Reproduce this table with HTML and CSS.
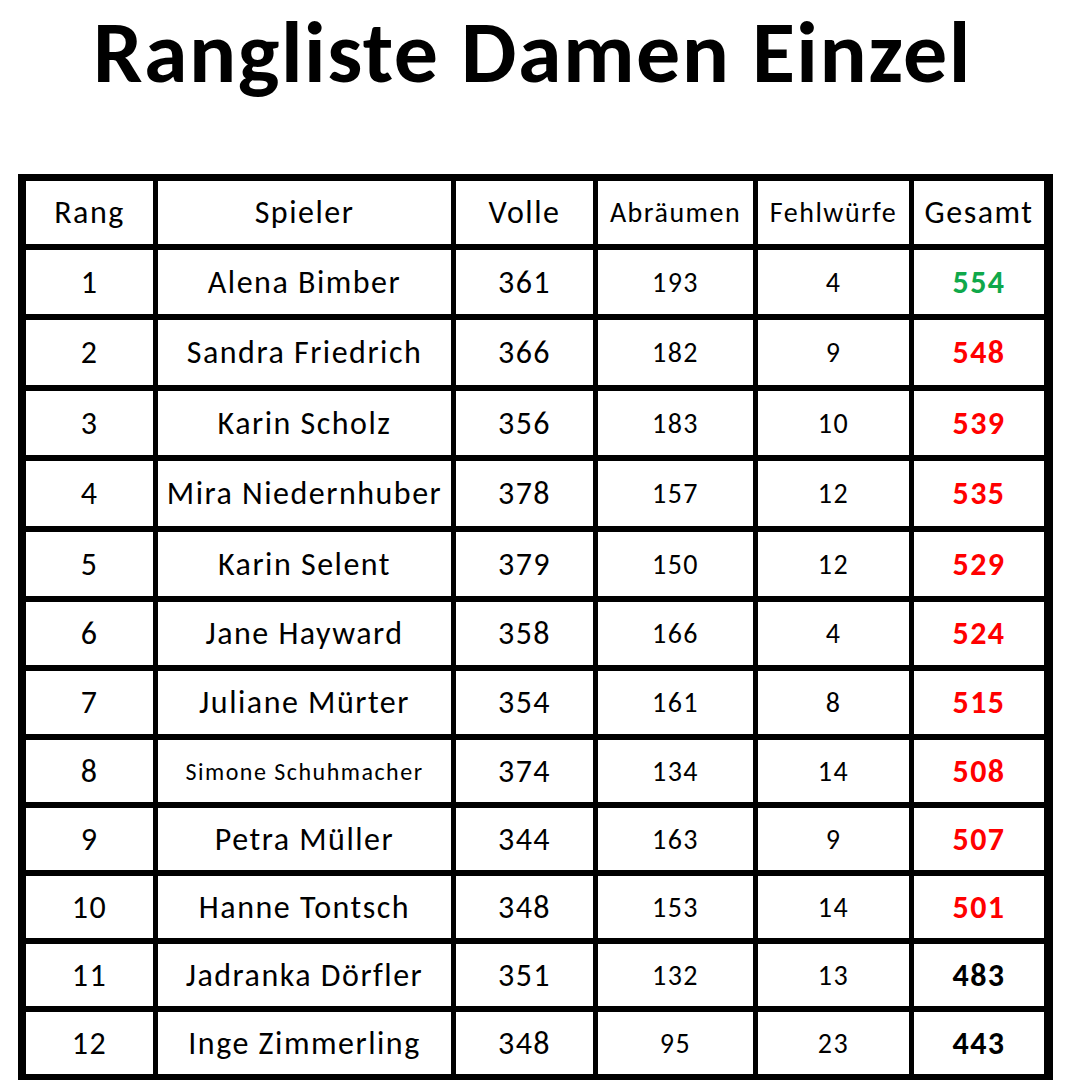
FILE: index.html
```html
<!DOCTYPE html>
<html lang="de">
<head>
<meta charset="utf-8">
<title>Rangliste Damen Einzel</title>
<link rel="stylesheet" href="styles.css">
</head>
<body>
<h1 class="title">Rangliste Damen Einzel</h1>
<div class="table" role="table">
  <div class="cell head">Rang</div>
  <div class="cell head">Spieler</div>
  <div class="cell head">Volle</div>
  <div class="cell head small">Abräumen</div>
  <div class="cell head small">Fehlwürfe</div>
  <div class="cell head">Gesamt</div>

  <div class="cell">1</div><div class="cell">Alena Bimber</div><div class="cell">361</div><div class="cell small">193</div><div class="cell small">4</div><div class="cell total green">554</div>
  <div class="cell">2</div><div class="cell">Sandra Friedrich</div><div class="cell">366</div><div class="cell small">182</div><div class="cell small">9</div><div class="cell total red">548</div>
  <div class="cell">3</div><div class="cell">Karin Scholz</div><div class="cell">356</div><div class="cell small">183</div><div class="cell small">10</div><div class="cell total red">539</div>
  <div class="cell">4</div><div class="cell">Mira Niedernhuber</div><div class="cell">378</div><div class="cell small">157</div><div class="cell small">12</div><div class="cell total red">535</div>
  <div class="cell">5</div><div class="cell">Karin Selent</div><div class="cell">379</div><div class="cell small">150</div><div class="cell small">12</div><div class="cell total red">529</div>
  <div class="cell">6</div><div class="cell">Jane Hayward</div><div class="cell">358</div><div class="cell small">166</div><div class="cell small">4</div><div class="cell total red">524</div>
  <div class="cell">7</div><div class="cell">Juliane Mürter</div><div class="cell">354</div><div class="cell small">161</div><div class="cell small">8</div><div class="cell total red">515</div>
  <div class="cell">8</div><div class="cell tiny">Simone Schuhmacher</div><div class="cell">374</div><div class="cell small">134</div><div class="cell small">14</div><div class="cell total red">508</div>
  <div class="cell">9</div><div class="cell">Petra Müller</div><div class="cell">344</div><div class="cell small">163</div><div class="cell small">9</div><div class="cell total red">507</div>
  <div class="cell">10</div><div class="cell">Hanne Tontsch</div><div class="cell">348</div><div class="cell small">153</div><div class="cell small">14</div><div class="cell total red">501</div>
  <div class="cell">11</div><div class="cell">Jadranka Dörfler</div><div class="cell">351</div><div class="cell small">132</div><div class="cell small">13</div><div class="cell total">483</div>
  <div class="cell">12</div><div class="cell">Inge Zimmerling</div><div class="cell">348</div><div class="cell small">95</div><div class="cell small">23</div><div class="cell total">443</div>
</div>
</body>
</html>
```
FILE: styles.css
```css
html, body {
  margin: 0;
  padding: 0;
  background: #ffffff;
}

body {
  font-family: Carlito, Calibri, Lato, "Open Sans", sans-serif;
  color: #000000;
}

.title {
  margin: 0;
  padding: 0;
  height: 174px;
  font-size: 88px;
  line-height: 104px;
  font-weight: 700;
  text-align: center;
  letter-spacing: 1.5px;
  display: flex;
  align-items: flex-start;
  justify-content: center;
}

.table {
  margin-left: 18px;
  width: 1035px;
  box-sizing: border-box;
  background: #000000;
  padding: 7px 9px 6px 8px;
  display: grid;
  grid-template-columns: 127px 293px 137px 155px 151px 130px;
  grid-template-rows: 63px 64px 65px 64px 65px 64px 63px 63px 62px 62px 62px 62px 62px;
  column-gap: 5px;
  row-gap: 6px;
}

.cell {
  background: #ffffff;
  display: flex;
  align-items: center;
  justify-content: center;
  font-size: 32px;
  letter-spacing: 1.5px;
  white-space: nowrap;
}

.small {
  font-size: 28px;
}

.tiny {
  font-size: 24px;
}

.total {
  font-weight: 700;
}

.green {
  color: #0fa84a;
}

.red {
  color: #ff0000;
}
```
